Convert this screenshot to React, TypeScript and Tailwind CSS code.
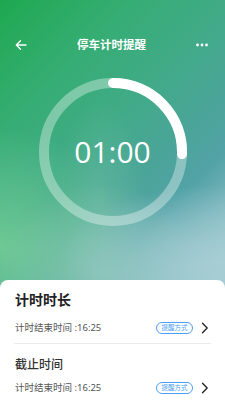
import React from "react";

function Chevron() {
  return (
    <svg width="8" height="12" viewBox="0 0 8 12" fill="none">
      <path d="M1.5 1.2 L6.2 6 L1.5 10.8" stroke="#222" strokeWidth="1.3" strokeLinecap="round" strokeLinejoin="round" />
    </svg>
  );
}

function Row() {
  return (
    <div className="flex items-center h-[14px]">
      <span className="text-[9.5px] leading-[14px] text-[#555]">计时结束时间 :16:25</span>
      <div className="ml-auto flex items-center">
        <span className="flex items-center justify-center h-[12px] w-[37px] rounded-full border border-[#4a9ff5] text-[6.5px] leading-none text-[#4a9ff5]">提醒方式</span>
        <div className="ml-[8px] mr-[1px]">
          <Chevron />
        </div>
      </div>
    </div>
  );
}

export default function App() {
  return (
    <div
      className="relative w-[225px] h-[400px] overflow-hidden flex flex-col bg-[radial-gradient(ellipse_75%_20%_at_100%_66%,rgba(168,206,212,0.95),transparent_100%),radial-gradient(ellipse_45%_22%_at_45%_68%,rgba(150,205,185,0.7),transparent_100%),radial-gradient(ellipse_55%_30%_at_0%_62%,rgba(118,206,150,0.85),transparent_100%),radial-gradient(ellipse_20%_25%_at_45%_50%,rgba(140,205,175,0.3),transparent_100%),linear-gradient(135deg,#1ea850_0%,#35ad72_20%,#40ab86_36%,#4aa598_50%,#52a2a6_60%,#85bcc4_72%,#a0cbd2_82%)]"
      style={{ fontFamily: '"Noto Sans", "Noto Sans CJK SC", sans-serif' }}
    >
      <div className="flex items-center justify-between h-[18px] mt-[36px] px-[15px]">
        <svg width="12" height="12" viewBox="0 0 12 12" fill="none">
          <path d="M11 6 H1.5 M5.5 1.8 L1.3 6 L5.5 10.2" stroke="#fff" strokeWidth="1.4" strokeLinecap="round" strokeLinejoin="round" />
        </svg>
        <span className="text-[11.5px] leading-[18px] font-bold text-white">停车计时提醒</span>
        <svg width="12" height="4" viewBox="0 0 12 4" fill="#fff" className="mr-[2px]">
          <circle cx="1.5" cy="2" r="1.4" />
          <circle cx="6" cy="2" r="1.4" />
          <circle cx="10.5" cy="2" r="1.4" />
        </svg>
      </div>

      <div className="relative mx-auto mt-[24px] w-[148px] h-[148px] flex items-center justify-center">
        <svg width="148" height="148" viewBox="0 0 148 148" fill="none" className="absolute inset-0">
          <circle cx="74" cy="74" r="69" stroke="rgba(255,255,255,0.35)" strokeWidth="10" />
          <path d="M74 5 A69 69 0 0 1 143 76" stroke="#fff" strokeWidth="10" strokeLinecap="round" />
        </svg>
        <span className="relative text-[30px] leading-none text-white font-medium" style={{ fontFamily: '"Open Sans", sans-serif' }}>01:00</span>
      </div>

      <div className="mt-auto h-[120px] bg-white rounded-t-[8px] px-[15px] pt-[10px]">
        <div className="text-[14px] leading-[20px] font-bold text-[#222]">计时时长</div>
        <div className="mt-[11px]">
          <Row />
        </div>
        <div className="mt-[8px] h-px bg-[#ececec] -mx-[1px]" />
        <div className="mt-[13px] text-[12px] leading-[16px] font-medium text-[#333]">截止时间</div>
        <div className="mt-[8px]">
          <Row />
        </div>
      </div>
    </div>
  );
}
